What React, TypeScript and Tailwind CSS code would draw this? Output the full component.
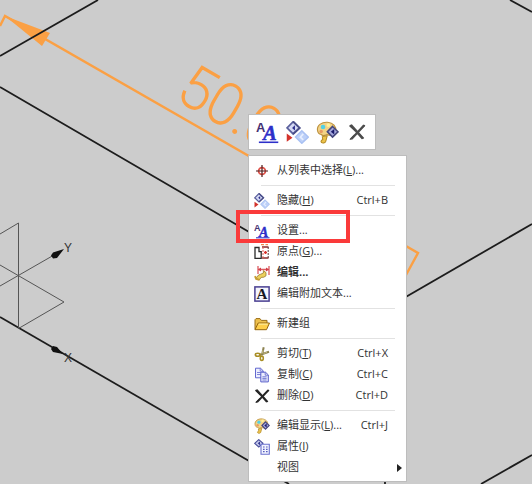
import React from 'react';

interface MenuEntry {
  label: string;
  mnemonic?: string;
  ellipsis?: boolean;
  shortcut?: string;
  icon?: React.FC<IconProps>;
  bold?: boolean;
  submenu?: boolean;
  marked?: boolean;
}

interface IconProps {
  className?: string;
}

const Icon: React.FC<IconProps & { children: React.ReactNode }> = ({ className = 'size-4', children }) => (
  <svg viewBox="0 0 16 16" className={`${className} shrink-0`} fill="none" aria-hidden="true">
    {children}
  </svg>
);

const TargetIcon: React.FC<IconProps> = ({ className }) => (
  <Icon className={className}>
    <circle cx="8" cy="8" r="3.4" stroke="#e0544c" strokeWidth="1.8" />
    <path d="M8 2v12M2 8h12" stroke="#4a1c1c" strokeWidth="1.2" />
  </Icon>
);

const HideIcon: React.FC<IconProps> = ({ className }) => (
  <Icon className={className}>
    <path d="M5 .5 9.5 4.8 5 9 .7 4.8z" fill="#d5d9f4" stroke="#5a5f9c" strokeWidth="1.2" />
    <path d="M6.2 3 4.2 4.8l2 1.8z" fill="#2c2f8c" />
    <path d="M5 .5 9.5 4.8 5 9" stroke="#4a4e88" strokeWidth="1.2" />
    <path d="M.5 8.7v5.8l4-2.9z" fill="#d3322b" />
    <path d="m11 6.8 4.5 4.4-4.5 4.3-4.4-4.3z" fill="#bcd0f8" stroke="#a9c1f3" />
    <path d="m12 9-2 2.2 2 2" stroke="#e6eeff" strokeWidth="1.2" />
  </Icon>
);

const StyleIcon: React.FC<IconProps> = ({ className }) => (
  <Icon className={className}>
    <text x="0" y="7.5" fontSize="9" fontWeight="700" fill="#453273" fontFamily="Liberation Sans, sans-serif">A</text>
    <text x="5" y="13.5" fontSize="14" fontWeight="700" fontStyle="italic" fill="#2d2fc9" stroke="#2d2fc9" strokeWidth=".4" fontFamily="Liberation Serif, serif">A</text>
    <path d="M2 14.8h13.5" stroke="#2d2fc9" strokeWidth="1.1" />
  </Icon>
);

const OriginIcon: React.FC<IconProps> = ({ className }) => (
  <Icon className={className}>
    <path d="M1 3.5h4v4.2h2.2v6.6H1z" stroke="#2a2a2a" strokeWidth="1.3" />
    <path d="M8 3h6.5M8 14h6.5" stroke="#8c2d2d" strokeWidth="1.3" />
    <path d="M14.2 3v11" stroke="#5a3636" strokeDasharray="2 1" />
    <path d="M9 3v11" stroke="#e06058" strokeDasharray="2 1" />
    <path d="M10 8.5h3M11.5 7v3" stroke="#d8322c" strokeWidth="1.3" />
    <path d="M7 .5h3M11.5.5h2.5" stroke="#f08a50" strokeWidth="1.5" />
  </Icon>
);

const EditIcon: React.FC<IconProps> = ({ className }) => (
  <Icon className={className}>
    <path d="M4 1v8M15 1v9M4 4.5h11" stroke="#dc5c62" strokeWidth="1.3" />
    <path d="m4 4.5 3-2v4zM15 4.5l-3-2v4z" fill="#d23d46" />
    <path d="M2 13.2 4.6 10l1.6-.6 3.2-1.4V5.6l2.6 2v3.2l-2.2 1.4-2.6.2-2 2.6z" fill="#ecd05c" stroke="#9b7930" strokeWidth=".8" />
    <path d="M1 11.2 2.2 14l3.4.9" stroke="#c79d35" strokeWidth="2" />
  </Icon>
);

const AppendTextIcon: React.FC<IconProps> = ({ className }) => (
  <Icon className={className}>
    <rect x=".9" y=".9" width="14.2" height="14.2" fill="#f4f4fc" stroke="#493f91" strokeWidth="1.5" />
    <text x="8" y="13" fontSize="15" fontWeight="700" textAnchor="middle" fill="#161622" fontFamily="Liberation Serif, serif">A</text>
  </Icon>
);

const FolderIcon: React.FC<IconProps> = ({ className }) => (
  <Icon className={className}>
    <path d="M1 13.5V3.7L2 2.6h4l1.3 1.8H13v3" fill="#eec04c" stroke="#9a6e18" />
    <path d="M1 13.7 4.2 7h11.3l-3 6.7z" fill="#ffcf4a" stroke="#95660f" />
    <path d="M4.8 8.1h9" stroke="#fff0ac" />
  </Icon>
);

const ScissorsIcon: React.FC<IconProps> = ({ className }) => (
  <Icon className={className}>
    <path d="M9.7 1.2 8 9M15 5.8 5.5 9" stroke="#8c8250" strokeWidth="2" />
    <path d="M9 4 8.3 7.5M13 6.4 9.5 7.6" stroke="#d9cf96" strokeWidth=".7" />
    <ellipse cx="3.7" cy="8.8" rx="2.4" ry="1.5" stroke="#a98e24" strokeWidth="1.6" />
    <ellipse cx="7.8" cy="12.3" rx="1.5" ry="2.2" stroke="#a98e24" strokeWidth="1.6" />
  </Icon>
);

const CopyIcon: React.FC<IconProps> = ({ className }) => (
  <Icon className={className}>
    <path d="M1.5 1.2h5l2.7 2.6v7H1.5z" fill="#eceefe" stroke="#6268cf" />
    <path d="M6.2 1.2v3h3M3 5.5h4M3 7.5h4" stroke="#6268cf" strokeWidth=".8" />
    <path d="M6.8 5.2h4.7l2.8 2.7v7H6.8z" fill="#eceefe" stroke="#565dc8" />
    <path d="M11.2 5.2v3h3M8.4 9.8h4.2M8.4 11.4h4.2M8.4 13h4.2" stroke="#565dc8" strokeWidth=".8" />
  </Icon>
);

const DeleteIcon: React.FC<IconProps> = ({ className = 'size-4 text-[#262626]' }) => (
  <Icon className={className}>
    <path d="M1.2 2 3.4 1.2 14.4 13.4 12.2 14.4z" fill="currentColor" />
    <path d="M13.6 1.4 15.4 2.4 4 14.6 1.2 14.8z" fill="currentColor" />
    <path d="m1.4 2.4 5 4.6M14.9 2 8.6 8M2 14.4l4-4M13.6 14 9.8 9.8" stroke="currentColor" strokeWidth="1.1" />
  </Icon>
);

const PaletteIcon: React.FC<IconProps> = ({ className }) => (
  <Icon className={className}>
    <path d="M1 6.3C.7 2.8 4.2.6 8 .9c4 .3 6.2 2.9 5.7 6-.4 2.6-2.2 3.4-4.4 3-1.1-.2-1.7-.8-2.6-.1-1.2.7-2 .6-3.1-.4C2.2 9.2 1.2 8.2 1 6.3z" fill="#f2d386" stroke="#bd923f" strokeWidth=".8" />
    <path d="M4.4 11c1-.2 2.1-1 3.4-.7l-1 3.9c-.4 1.2-2.2 1.5-3 .7-.8-.8 0-1.6.9-2z" fill="#edc34a" stroke="#b18825" strokeWidth=".7" />
    <circle cx="4.9" cy="4.2" r="1.6" fill="#52d0e5" />
    <circle cx="8.6" cy="2.8" r="1.3" fill="#fff29a" />
    <circle cx="3.6" cy="7.3" r="1.2" fill="#e89a62" />
    <path d="m11.5 3.8 3.8 3.7-3.8 3.7-3.6-3.7z" fill="#a4a7dc" stroke="#44467c" strokeWidth="1.1" />
    <path d="m12.7 5.6-2.4 1.9 2.4 1.9z" fill="#191a6b" />
  </Icon>
);

const PropertiesIcon: React.FC<IconProps> = ({ className }) => (
  <Icon className={className}>
    <path d="M4.8.6 9 4.3 4.8 8 .7 4.3z" fill="#c7cbed" stroke="#4a4f9b" strokeWidth="1.1" />
    <path d="M6 2.4 3.7 4.3 6 6.2z" fill="#34388e" />
    <path d="M7 5.2h8.3v10H7z" fill="#f2f4ff" stroke="#6b72ce" strokeWidth="1.1" />
    <path d="M9 8h1.6M12 8h1.6M9 10.3h1.6M12 10.3h1.6M9 12.6h1.6M12 12.6h1.6" stroke="#565dbe" strokeWidth="1.2" />
  </Icon>
);

const MENU_GROUPS: MenuEntry[][] = [
  [{ label: '从列表中选择', mnemonic: 'L', ellipsis: true, icon: TargetIcon }],
  [{ label: '隐藏', mnemonic: 'H', shortcut: 'Ctrl+B', icon: HideIcon }],
  [
    { label: '设置', ellipsis: true, icon: StyleIcon, marked: true },
    { label: '原点', mnemonic: 'G', ellipsis: true, icon: OriginIcon },
    { label: '编辑', ellipsis: true, icon: EditIcon, bold: true },
    { label: '编辑附加文本', ellipsis: true, icon: AppendTextIcon },
  ],
  [{ label: '新建组', icon: FolderIcon }],
  [
    { label: '剪切', mnemonic: 'T', shortcut: 'Ctrl+X', icon: ScissorsIcon },
    { label: '复制', mnemonic: 'C', shortcut: 'Ctrl+C', icon: CopyIcon },
    { label: '删除', mnemonic: 'D', shortcut: 'Ctrl+D', icon: DeleteIcon },
  ],
  [
    { label: '编辑显示', mnemonic: 'L', ellipsis: true, shortcut: 'Ctrl+J', icon: PaletteIcon },
    { label: '属性', mnemonic: 'I', icon: PropertiesIcon },
    { label: '视图', submenu: true },
  ],
];

const TOOLS = [
  { name: '设置', icon: StyleIcon, iconClass: 'size-[23px]' },
  { name: '隐藏', icon: HideIcon, iconClass: 'size-[23px]' },
  { name: '编辑显示', icon: PaletteIcon, iconClass: 'size-[23px]' },
  { name: '删除', icon: DeleteIcon, iconClass: 'size-[18px] text-[#4c4c4c]' },
];

const MenuRow: React.FC<{ entry: MenuEntry }> = ({ entry }) => {
  const EntryIcon = entry.icon;
  return (
    <li role="none" className="relative">
      <button
        type="button"
        role="menuitem"
        className={`flex h-[21px] w-full items-center pl-[5px] text-left whitespace-nowrap hover:bg-sky-100 ${
          entry.submenu ? 'pr-1' : 'pr-[18px]'
        } ${entry.bold ? 'font-bold' : ''}`}
      >
        <span className="mr-[7px] flex size-4 items-center justify-center">{EntryIcon && <EntryIcon />}</span>
        <span>
          {entry.label}
          {entry.mnemonic && (
            <>
              (<u>{entry.mnemonic}</u>)
            </>
          )}
          {entry.ellipsis && '...'}
        </span>
        {entry.shortcut && <kbd className="ml-auto font-[inherit]">{entry.shortcut}</kbd>}
        {entry.submenu && (
          <svg viewBox="0 0 5 8" className="ml-auto h-2 w-[5px]" aria-hidden="true">
            <path d="M0 0 5 4 0 8z" fill="#222" />
          </svg>
        )}
      </button>
      {entry.marked && (
        <span className="pointer-events-none absolute -top-[10px] -left-[13px] z-10 h-[33px] w-[114px] border-4 border-[#fa3a3a]" />
      )}
    </li>
  );
};

const Drawing: React.FC = () => (
  <svg className="absolute inset-0 size-full" fill="none" aria-label="50.0">
    {/* linear dimension */}
    <g stroke="#fba044" strokeWidth="2.4">
      <path d="M0 26 5 16 418 253 406 275" />
      <path d="M5 16 50 33 42 46z" fill="#fba044" stroke="none" />
      <text
        transform="translate(174 98) rotate(30)"
        fontSize="58"
        fontWeight="100"
        fill="#fba044"
        strokeWidth="1.8"
        fontFamily="Roboto, sans-serif"
      >
        50.0
      </text>
    </g>

    {/* model edges */}
    <g stroke="#1c1c1c" strokeWidth="1.8">
      <path d="M0 56 98 0" />
      <path d="M0 87 385 311V484" />
      <path d="M0 317 289 484" />
      <path d="M385 309 532 224" />
      <path d="M510 0 532 12" />
      <path d="M481 484 532 455" />
    </g>

    {/* datum planes and axes */}
    <g stroke="#555" strokeWidth="1">
      <path d="M0 234 18.5 223V328.5L64 302 0 265" />
      <path d="M0 286 54 255" />
    </g>
    <path d="m64 249-11 3.5-2 3 2 3 4-.5z" fill="#111" />
    <path d="m63 354-6-7-4-1-2 3 2 3z" fill="#111" />
    <g fill="#333" fontSize="12" fontFamily="Liberation Sans, sans-serif">
      <text x="64" y="252">Y</text>
      <text x="64" y="362">X</text>
    </g>
  </svg>
);

const App: React.FC = () => {
  return (
    <main className="relative min-h-screen overflow-hidden bg-[#cccccc] font-['Open_Sans','Noto_Sans_CJK_SC',sans-serif] text-[11px] text-[#333]">
      <Drawing />

      <div className="absolute top-[114px] left-[248px] flex flex-col items-start gap-[5px]">
        <div role="toolbar" className="flex items-center gap-[6px] border border-[#bdbdbd] bg-white px-[6px] py-[5px]">
          {TOOLS.map((tool) => (
            <button
              key={tool.name}
              type="button"
              aria-label={tool.name}
              className="flex size-6 items-center justify-center hover:bg-sky-100"
            >
              <tool.icon className={tool.iconClass} />
            </button>
          ))}
        </div>

        <div role="menu" className="w-[159px] border border-[#bdbdbd] bg-white pt-1 pb-[3px]">
          {MENU_GROUPS.map((group, idx) => (
            <React.Fragment key={idx}>
              {idx > 0 && <hr className="my-1 mr-[11px] ml-3 border-[#e2e2e2]" />}
              <ul role="group">
                {group.map((entry) => (
                  <MenuRow key={entry.label} entry={entry} />
                ))}
              </ul>
            </React.Fragment>
          ))}
        </div>
      </div>
    </main>
  );
};

export default App;
